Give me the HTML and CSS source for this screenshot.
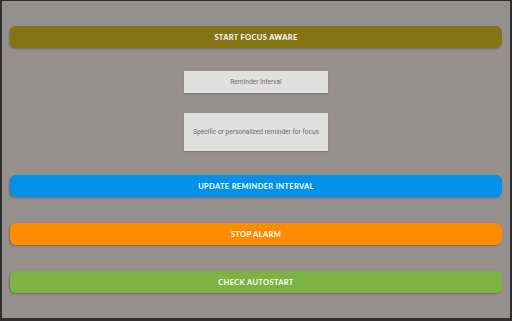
FILE: index.html
```html
<!DOCTYPE html>
<html>
<head>
<meta charset="utf-8">
<link rel="stylesheet" href="styles.css">
</head>
<body>
<main class="screen">
  <button class="btn btn-olive">START FOCUS AWARE</button>
  <div class="field field-short">Reminder Interval</div>
  <div class="field field-tall">Specific or personalized reminder for focus</div>
  <button class="btn btn-blue">UPDATE REMINDER INTERVAL</button>
  <button class="btn btn-orange">STOP ALARM</button>
  <button class="btn btn-green">CHECK AUTOSTART</button>
</main>
</body>
</html>
```
FILE: styles.css
```css
html, body {
  margin: 0;
  padding: 0;
  background: #2f2f2f;
}
body {
  width: 512px;
  height: 321px;
  box-sizing: border-box;
  padding: 1px 2px 3px 2px;
}
.screen {
  width: 100%;
  height: 100%;
  background: #958f8e;
  box-sizing: border-box;
  padding: 25px 8px 0 8px;
  display: flex;
  flex-direction: column;
  align-items: center;
}
.btn {
  width: 100%;
  height: 22px;
  border: none;
  border-radius: 6px;
  color: #fff;
  font-family: Lato, "Liberation Sans", sans-serif;
  font-weight: 700;
  font-size: 7.5px;
  letter-spacing: 0.35px;
  box-shadow: -1px 1px 2px rgba(0,0,0,0.25);
  padding: 0;
  flex: none;
}
.btn-olive { background: #837516; }
.btn-blue { background: #0091ea; margin-top: 24px; }
.btn-orange { background: #ff8c00; margin-top: 26px; }
.btn-green { background: #7cb342; margin-top: 26px; }
.field {
  width: 144px;
  background: #e0e0e0;
  color: #6e6e6e;
  font-family: Roboto, "Liberation Sans", sans-serif;
  font-size: 6.6px;
  display: flex;
  align-items: center;
  justify-content: center;
  box-shadow: 0 1px 1px rgba(0,0,0,0.15);
  flex: none;
}
.field-short { height: 22px; margin-top: 23px; }
.field-tall { height: 38px; margin-top: 20px; }
```
